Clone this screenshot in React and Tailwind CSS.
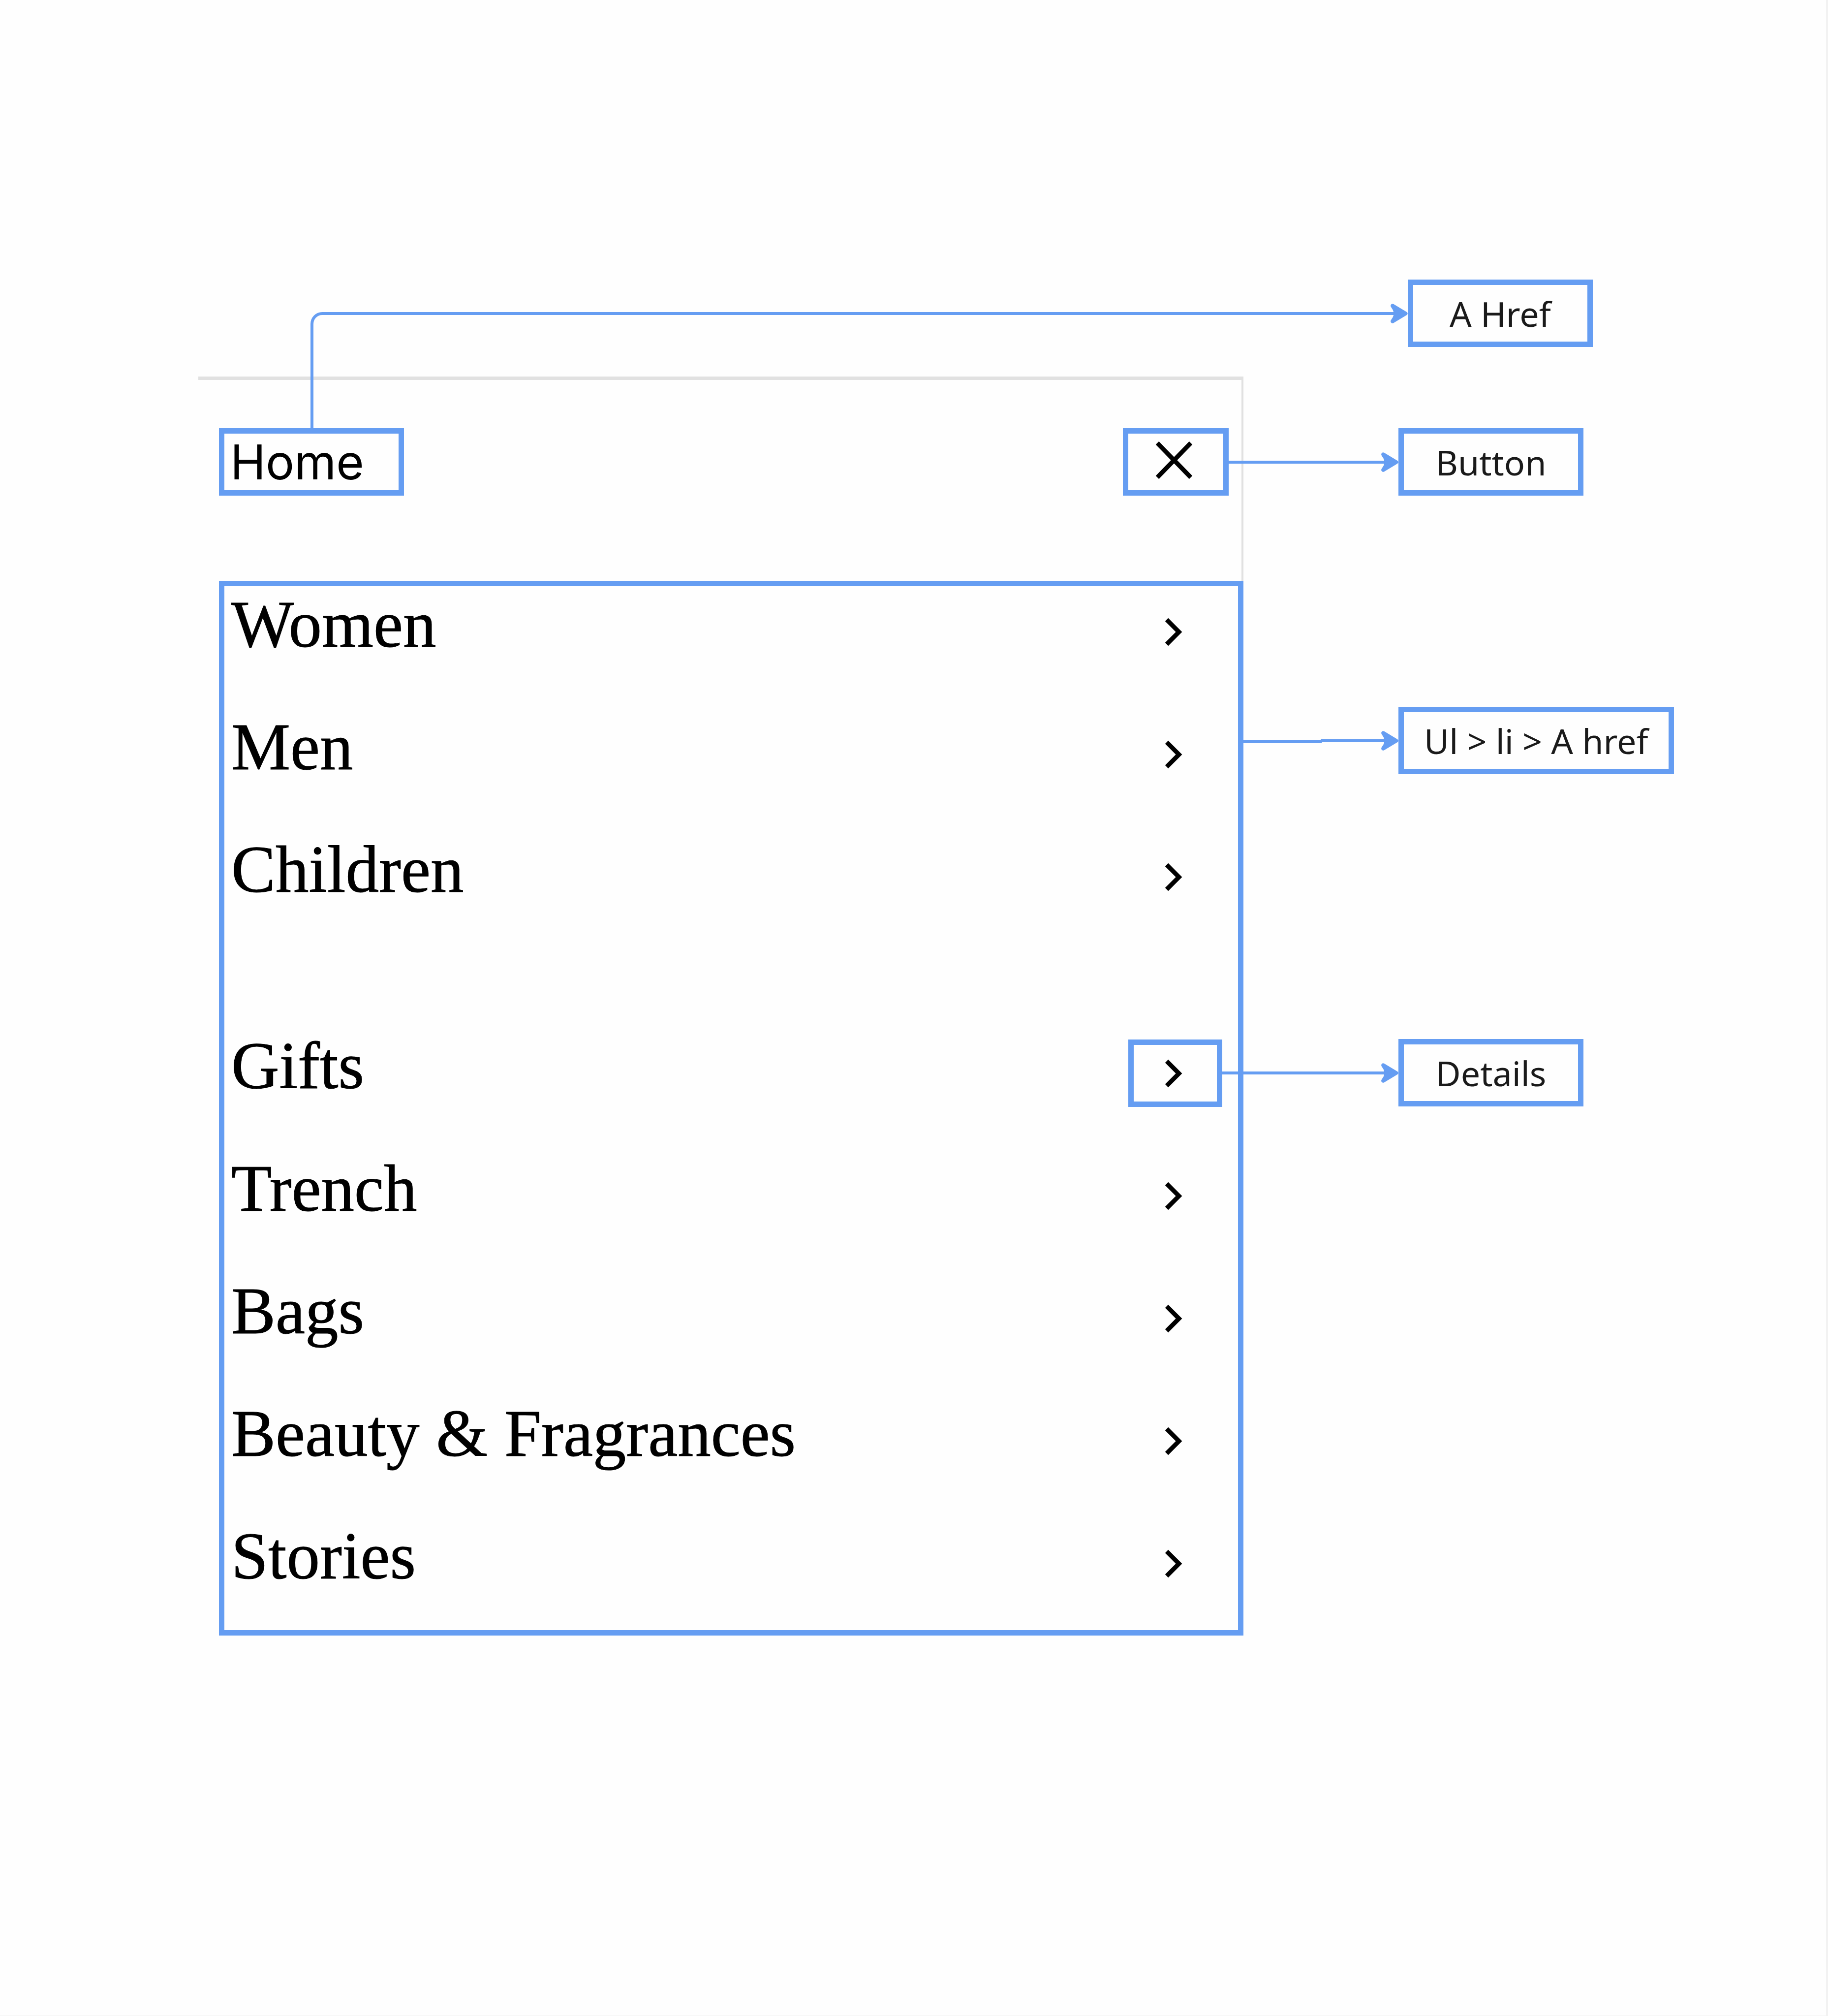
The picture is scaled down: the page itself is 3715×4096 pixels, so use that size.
const primary = ["Women", "Men", "Children"];
const secondary = ["Gifts", "Trench", "Bags", "Beauty & Fragrances", "Stories"];

function ArrowHead() {
  return (
    <svg aria-hidden="true" viewBox="0 0 35 40" className="-ml-[28px] h-[40px] w-[35px] shrink-0 fill-[#659df2]">
      <path d="M6 .8 L33 17 Q36.500 20 33 23 L6 39.200 Q3.500 40.600 1.200 38.600 Q-.6 36.600 .6 33.800 L4.600 27.500 Q6.400 23.500 6.400 20 Q6.400 16.500 4.600 12.500 L.6 6.200 Q-.6 3.400 1.200 1.400 Q3.500 -.6 6 .8Z" />
    </svg>
  );
}

function Label({ children }) {
  return (
    <div className="flex h-[137px] min-w-[376px] shrink-0 items-center justify-center border-[11px] border-[#659df2] px-[41px] text-[70px] leading-[96px] whitespace-nowrap text-[#1a1a1a]">
      {children}
    </div>
  );
}

function Chevron() {
  return (
    <svg aria-hidden="true" viewBox="0 0 36 58" className="h-[58px] w-[36px] fill-none stroke-black stroke-[9]">
      <path d="M4 4 L29 29 L4 54" />
    </svg>
  );
}

function MenuRow({ name, outlined, className = "" }) {
  return (
    <li className={"flex items-start justify-between " + className}>
      <a
        href="#"
        className="font-['Liberation_Serif',serif] text-[135px] leading-[136px] [-webkit-text-stroke:1px_black]"
      >
        {name}
      </a>
      <button
        type="button"
        aria-label={"Show " + name}
        className={
          "mt-[14px] flex h-[137px] w-[191px] items-center justify-center border-[11px] pr-2 " +
          (outlined ? "border-[#659df2]" : "border-transparent")
        }
      >
        <Chevron />
      </button>
    </li>
  );
}

export default function App() {
  return (
    <main className="min-h-screen border-r-4 border-b border-[#f2f2f2] bg-[#fefefe] pt-[568px] font-['Noto_Sans',sans-serif] text-black">
      {/* Link annotation with its connector down to the Home link */}
      <div className="relative z-10 flex h-[137px] items-start pr-[474px] pl-[17%]">
        <div className="mt-[66px] h-[236px] flex-1 rounded-tl-[24px] border-t-[6px] border-l-[6px] border-[#659df2]" />
        <div className="flex items-center">
          <ArrowHead />
          <Label>A Href</Label>
        </div>
      </div>

      <div className="mt-[60px] flex items-start pl-[403px]">
        <nav aria-label="Main" className="min-w-0 flex-1">
          <div className="flex h-[415px] items-start justify-between border-t-[7px] border-r-4 border-[#e1e1e1] pt-[98px] pr-[26px] pl-[42px]">
            <a
              href="#"
              className="flex h-[137px] w-[376px] items-center border-[11px] border-[#659df2] pl-3 font-['Inter',sans-serif] text-[97px] leading-[114px]"
            >
              Home
            </a>
            <button
              type="button"
              aria-label="Close"
              className="flex h-[137px] w-[215px] items-center justify-center border-[11px] border-[#659df2] pr-2 pb-2"
            >
              <svg aria-hidden="true" viewBox="0 0 76 76" className="h-[76px] w-[76px] stroke-black stroke-[9]">
                <path d="M4 3 L72 73 M72 3 L4 73" />
              </svg>
            </button>
          </div>
          <ul className="ml-[42px] flex flex-col gap-[98px] border-[11px] border-[#659df2] pt-[10px] pr-[32px] pb-[67px] pl-[14px]">
            {primary.map((name) => (
              <MenuRow key={name} name={name} />
            ))}
            {secondary.map((name, i) => (
              <MenuRow key={name} name={name} outlined={i === 0} className={i === 0 ? "mt-[150px]" : ""} />
            ))}
          </ul>
        </nav>

        <aside className="flex w-[1184px] shrink-0 flex-col pt-[105px]">
          <div className="relative -ml-[30px] flex items-center">
            <div className="h-[6px] w-[338px] bg-[#659df2]" />
            <ArrowHead />
            <Label>Button</Label>
          </div>
          <div className="mt-[429px] flex items-center">
            <svg aria-hidden="true" viewBox="0 0 308 12" className="h-[12px] w-[308px] fill-none stroke-[#659df2] stroke-[6]">
              <path d="M0 8 H157 L159 6 H308" />
            </svg>
            <ArrowHead />
            <Label>{"Ul > li > A href"}</Label>
          </div>
          <div className="relative mt-[538px] -ml-[43px] flex items-center">
            <div className="h-[6px] w-[351px] bg-[#659df2]" />
            <ArrowHead />
            <Label>Details</Label>
          </div>
        </aside>
      </div>
    </main>
  );
}
